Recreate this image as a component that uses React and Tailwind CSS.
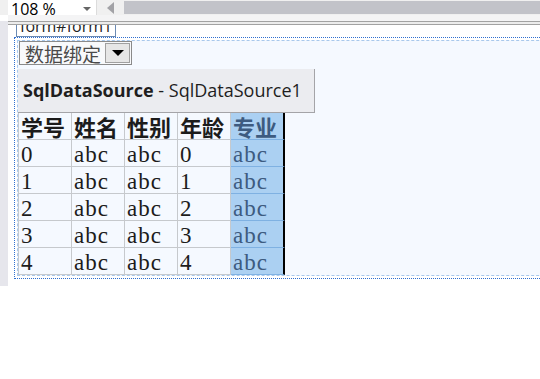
import React from 'react';

const COLS = ['学号', '姓名', '性别', '年龄', '专业'];
const ROWS = [0, 1, 2, 3, 4];

const serif = "font-['Liberation_Serif','Noto_Sans_CJK_SC',serif]";
const cjk = "font-['Noto_Sans_CJK_SC',sans-serif]";

function Cell({ children, head, selected }) {
  return (
    <div
      className={`h-[27px] w-[53px] shrink-0 border-b flex items-center pl-[2px] overflow-hidden whitespace-nowrap ${
        selected
          ? 'bg-[#abd0f2] border-[#7fb1e2] text-[#3d5b80] border-r-2 border-r-black w-[54px]'
          : 'border-r border-[#c6c9cd] text-[#1c1c1c]'
      } ${head ? `${cjk} text-[22px] font-bold leading-none` : `${serif} text-[23px] tracking-[1px] leading-none pt-[2px]`}`}
    >
      {children}
    </div>
  );
}

export default function App() {
  return (
    <div className="w-[540px] h-[379px] overflow-hidden bg-white font-['Open_Sans',sans-serif]">
      {/* zoom + horizontal scroll bar */}
      <div className="flex h-[15px] bg-[#f0f0f0]">
        <div className="ml-[8px] w-[89px] bg-white border-r border-[#dcdcdc] flex items-center justify-between pl-[3px] pr-[5px]">
          <span className="text-[16px] leading-none text-black mt-[3px]">108 %</span>
          <span className="w-0 h-0 border-l-[4px] border-r-[4px] border-t-[4px] border-l-transparent border-r-transparent border-t-[#666] mt-[2px]" />
        </div>
        <div className="w-[27px] flex items-center justify-center">
          <span className="w-0 h-0 border-t-[6px] border-b-[6px] border-r-[7px] border-t-transparent border-b-transparent border-r-[#a2a2a6]" />
        </div>
        <div className="flex-1 mt-[1px] h-[13px] bg-[#c2c3c9]" />
      </div>
      <div className="h-[6px] ml-[8px] bg-[#f4f4f5]" />
      <div className="flex">
        <div className="w-[8px] shrink-0 bg-[#e6e6ec]" />
        <div className="flex-1 h-[4px] border-t border-b border-[#a2a2a2] bg-[#ececec]" />
      </div>

      {/* design surface */}
      <div className="flex">
        <div className="w-[8px] h-[261px] shrink-0 bg-[#e6e6ec]" />
        <div className="flex-1 flex flex-col">
          <div className="ml-[8px] w-[100px] h-[12px] border border-t-0 border-[#6b8ab3] bg-white overflow-hidden">
            <div className="text-[16px] leading-none text-[#222] pl-[3px] -mt-[7px]">form#form1</div>
          </div>
          <div className="ml-[6px] w-[600px] border border-dotted border-[#2f6fd0] border-r-0 bg-white p-[2px] pr-0">
            <div className="border border-dashed border-[#a8c8ec] border-r-0 bg-[#f5f9ff] h-[236px]">
              {/* data-binding dropdown */}
              <div className="ml-[1px] flex w-[113px] h-[24px] border border-[#8a8a8a] bg-[#f8f9fb]">
                <div className={`${cjk} flex-1 text-[19px] leading-none text-[#4a4a4a] flex items-center pl-[5px]`}>数据绑定</div>
                <div className="w-[25px] m-[1px] border border-[#a0a0a0] bg-[#e6e6e6] flex items-center justify-center">
                  <span className="w-0 h-0 border-l-[6px] border-r-[6px] border-t-[6px] border-l-transparent border-r-transparent border-t-black" />
                </div>
              </div>
              {/* control header */}
              <div className="mt-[4px] w-[297px] h-[44px] bg-[#ebecf0] border-r border-b border-[#a4a4a8] flex items-center pl-[5px] text-[18px] text-[#1e1e1e] whitespace-nowrap">
                <span className="font-bold">SqlDataSource</span>
                <span>&nbsp;- SqlDataSource1</span>
              </div>
              {/* grid */}
              <div className="w-[267px] border-l border-[#c6c9cd]">
                <div className="flex">
                  {COLS.map((c, i) => (
                    <Cell key={c} head selected={i === 4}>{c}</Cell>
                  ))}
                </div>
                {ROWS.map((r) => (
                  <div key={r} className="flex">
                    <Cell>{r}</Cell>
                    <Cell>abc</Cell>
                    <Cell>abc</Cell>
                    <Cell>{r}</Cell>
                    <Cell selected>abc</Cell>
                  </div>
                ))}
              </div>
            </div>
          </div>
        </div>
      </div>
    </div>
  );
}
